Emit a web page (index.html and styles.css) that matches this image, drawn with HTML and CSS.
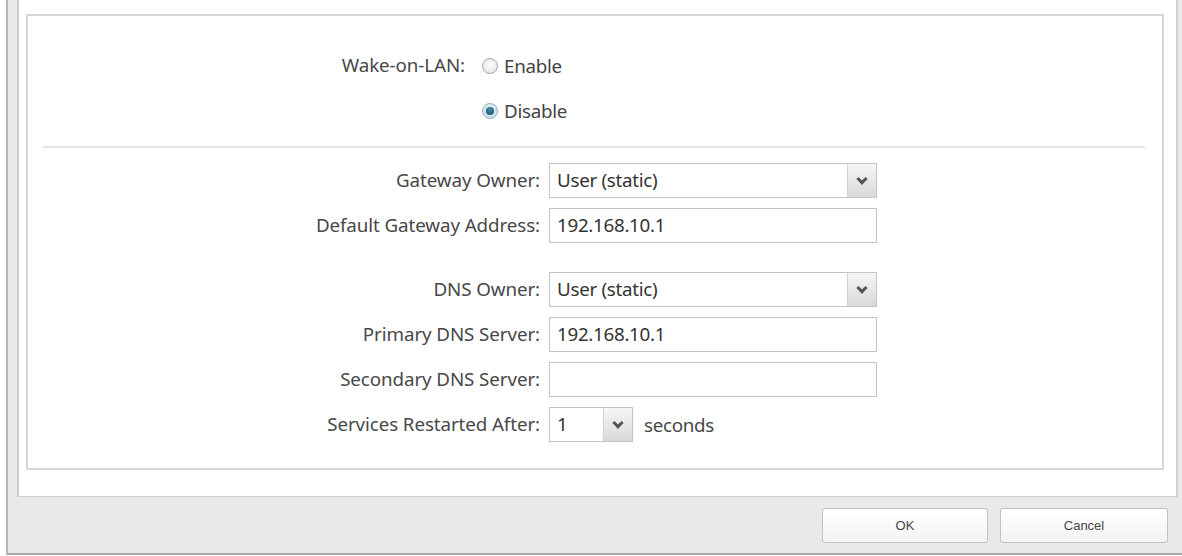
FILE: index.html
```html
<!DOCTYPE html>
<html lang="en">
<head>
    <meta charset="UTF-8">
    <title>Network Settings</title>
    <link rel="stylesheet" href="styles.css">
</head>
<body>

    <!-- Ventana del dialogo -->
    <div class="window">

        <div class="panel">
            <div class="box">

                <!-- Wake-on-LAN -->
                <div class="wol">
                    <div class="wol-label">Wake-on-LAN:</div>
                    <div class="wol-options">
                        <label class="radio-row"><span class="radio"></span>Enable</label>
                        <label class="radio-row"><span class="radio checked"></span>Disable</label>
                    </div>
                </div>

                <div class="separator"></div>

                <!-- Gateway y DNS -->
                <div class="form">
                    <div class="label">Gateway Owner:</div>
                    <div class="select wide"><span class="value">User (static)</span><span class="arrow"></span></div>

                    <div class="label">Default Gateway Address:</div>
                    <div class="input wide">192.168.10.1</div>

                    <div class="label spaced">DNS Owner:</div>
                    <div class="select wide spaced"><span class="value">User (static)</span><span class="arrow"></span></div>

                    <div class="label">Primary DNS Server:</div>
                    <div class="input wide">192.168.10.1</div>

                    <div class="label">Secondary DNS Server:</div>
                    <div class="input wide"></div>

                    <div class="label">Services Restarted After:</div>
                    <div class="inline">
                        <div class="select small"><span class="value">1</span><span class="arrow"></span></div>
                        <span class="unit">seconds</span>
                    </div>
                </div>

            </div>
        </div>

        <!-- Botones -->
        <div class="footer">
            <button class="btn ok">OK</button>
            <button class="btn cancel">Cancel</button>
        </div>

    </div>

</body>
</html>
```

FILE: styles.css
```css
/* Estilos globales */
* {
    margin: 0;
    padding: 0;
    box-sizing: border-box;
}

body, html {
    background: #fff;
    font-family: 'Noto Sans', 'Open Sans', sans-serif;
    color: #484848;
}

/* Ventana */
.window {
    margin-left: 6px;
    width: 1176px;
    height: 555px;
    background: #e9e9e9;
    border-left: 2px solid #b5b5b5;
    border-bottom: 2px solid #a9a9a9;
    display: flex;
    flex-direction: column;
}

.panel {
    margin-left: 9px;
    width: 1161px;
    height: 497px;
    background: #fff;
    border: 1px solid #cfcfcf;
    border-top: none;
    border-left-width: 2px;
    border-right-width: 2px;
    padding: 14px 12px 26px 7px;
}

.box {
    height: 100%;
    border: 2px solid #d6d6d6;
    padding-top: 27px;
}

/* Wake-on-LAN */
.wol {
    display: flex;
}

.wol-label {
    width: 437px;
    text-align: right;
    font-size: 18.8px;
    letter-spacing: -0.1px;
    line-height: 45px;
    height: 45px;
}

.wol-options {
    padding-left: 17px;
    display: flex;
    flex-direction: column;
}

.radio-row {
    display: flex;
    align-items: center;
    height: 45px;
    font-size: 18.8px;
    letter-spacing: -0.3px;
    color: #444;
}

.radio {
    width: 16px;
    height: 16px;
    border-radius: 50%;
    border: 1px solid #a8a8a8;
    background: radial-gradient(circle at 50% 40%, #fdfdfd 0%, #e6e6e6 80%);
    margin-right: 6px;
    position: relative;
}

.radio.checked {
    border-color: #8fb3c4;
    background: radial-gradient(circle at 50% 40%, #e9f3f7 0%, #c9dde6 80%);
}

.radio.checked::after {
    content: '';
    position: absolute;
    left: 3px;
    top: 3px;
    width: 8px;
    height: 8px;
    border-radius: 50%;
    background: radial-gradient(circle at 50% 35%, #3f8fb0 0%, #14506a 90%);
}

.separator {
    height: 2px;
    background: #e4e4e4;
    margin: 13px 17px 15px 15px;
}

/* Formulario */
.form {
    display: grid;
    grid-template-columns: 512px 1fr;
    column-gap: 9px;
    row-gap: 10px;
}

.label {
    text-align: right;
    font-size: 18.8px;
    letter-spacing: -0.1px;
    line-height: 35px;
    color: #484848;
}

.spaced {
    margin-top: 19px;
}

.input, .select {
    height: 35px;
    border: 1px solid #c4c4c4;
    background: #fff;
    font-size: 18.8px;
    letter-spacing: -0.3px;
    line-height: 33px;
    color: #333;
}

.input {
    padding-left: 7px;
}

.wide {
    width: 328px;
}

.select {
    display: flex;
}

.select .value {
    flex: 1;
    padding-left: 7px;
}

.select .arrow {
    width: 29px;
    border-left: 1px solid #d4d4d4;
    background: linear-gradient(#f6f6f6, #d9d9d9);
    position: relative;
}

.select .arrow::after {
    content: '';
    position: absolute;
    left: 10px;
    top: 11px;
    width: 5px;
    height: 5px;
    border-right: 3px solid #555;
    border-bottom: 3px solid #555;
    transform: rotate(45deg);
}

.select.small {
    width: 84px;
}

.inline {
    display: flex;
    align-items: center;
}

.unit {
    margin-left: 11px;
    font-size: 18.8px;
    letter-spacing: -0.3px;
    color: #484848;
}

/* Botones */
.footer {
    flex: 1;
    display: flex;
    justify-content: flex-end;
    align-items: center;
    gap: 12px;
    padding-right: 14px;
}

.btn {
    height: 35px;
    border: 1px solid #c2c2c2;
    border-radius: 3px;
    background: linear-gradient(#ffffff, #f3f3f3);
    font-family: 'Liberation Sans', Arial, sans-serif;
    font-size: 13px;
    color: #444;
}

.btn.ok {
    width: 166px;
}

.btn.cancel {
    width: 168px;
}
```
